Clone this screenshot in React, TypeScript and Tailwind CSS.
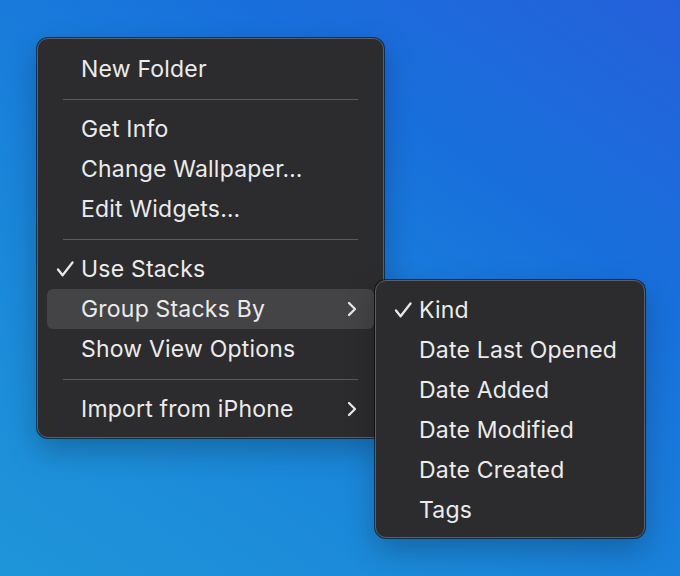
import { type ReactNode } from 'react'

function Check() {
  return (
    <svg width="18" height="16" viewBox="0 0 18 16" fill="none" className="absolute">
      <path d="M2 8.5l4.6 5.8L16.5 1.5" stroke="#e8e8e8" strokeWidth="2.3" strokeLinecap="round" strokeLinejoin="round" />
    </svg>
  )
}

function Chevron() {
  return (
    <svg width="10" height="16" viewBox="0 0 10 16" fill="none">
      <path d="M2 2l6 6-6 6" stroke="#e8e8e8" strokeWidth="2.3" strokeLinecap="round" strokeLinejoin="round" />
    </svg>
  )
}

function Item({
  label,
  checked,
  submenu,
  active,
}: {
  label: string
  checked?: boolean
  submenu?: boolean
  active?: boolean
}) {
  return (
    <div
      className={`relative mx-[9px] flex h-10 items-center rounded-[6px] pl-[34px] pr-[17px] ${
        active ? 'bg-[#444345]' : ''
      }`}
    >
      {checked && (
        <span className="absolute left-[9px] top-[12px]">
          <Check />
        </span>
      )}
      <span className="flex-1 pt-px text-[23px] leading-none tracking-[0.2px] text-[#ebebeb]">{label}</span>
      {submenu && <Chevron />}
    </div>
  )
}

function Separator() {
  return (
    <div className="flex h-5 items-center px-[25px]">
      <div className="h-px w-full bg-[#5a595b]" />
    </div>
  )
}

function Menu({ className, children }: { className: string; children: ReactNode }) {
  return (
    <div
      className={`absolute rounded-[11px] border border-[#5e5d60] bg-[#2c2b2d] shadow-[0_0_0_1px_rgba(0,0,0,0.55),0_12px_30px_rgba(0,0,0,0.25)] ${className}`}
    >
      {children}
    </div>
  )
}

export default function App() {
  return (
    <div
      className="relative h-[576px] w-[680px] overflow-hidden bg-[linear-gradient(35deg,#1f95d9_0%,#1a84da_40%,#1870dc_70%,#2560da_100%)]"
      style={{ fontFamily: 'Inter, "Noto Sans", sans-serif' }}
    >
      <Menu className="left-[37px] top-[38px] w-[347px] pb-[8px] pt-[10px]">
        <Item label="New Folder" />
        <Separator />
        <Item label="Get Info" />
        <Item label="Change Wallpaper…" />
        <Item label="Edit Widgets…" />
        <Separator />
        <Item label="Use Stacks" checked />
        <Item label="Group Stacks By" submenu active />
        <Item label="Show View Options" />
        <Separator />
        <Item label="Import from iPhone" submenu />
      </Menu>

      <Menu className="left-[375px] top-[280px] w-[270px] pb-[7px] pt-[9px]">
        <Item label="Kind" checked />
        <Item label="Date Last Opened" />
        <Item label="Date Added" />
        <Item label="Date Modified" />
        <Item label="Date Created" />
        <Item label="Tags" />
      </Menu>
    </div>
  )
}
